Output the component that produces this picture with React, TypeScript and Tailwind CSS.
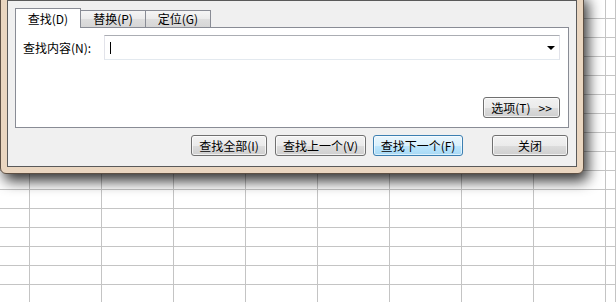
const font = "font-['Noto_Sans_CJK_SC','Liberation_Sans',sans-serif]";

const btn =
  'flex h-[21px] items-center justify-center rounded-[3px] border border-[#707070] bg-[linear-gradient(to_bottom,#f2f2f2_0%,#ebebeb_50%,#dddddd_51%,#cfcfcf_100%)] text-[12px] text-black shadow-[inset_0_0_0_1px_rgba(255,255,255,0.7)]';

const SheetGrid = () => {
  const rows = Array.from({ length: 16 });
  const cols = Array.from({ length: 10 });
  return (
    <div className="grid grid-cols-[30px_repeat(8,72px)_1fr] auto-rows-[19px]">
      {rows.map((_, r) =>
        cols.map((_, c) => (
          <div key={`${r}-${c}`} className="border-b border-r border-[#c4c4c4] bg-white" />
        )),
      )}
    </div>
  );
};

const Tab = ({ label, active }: { label: string; active?: boolean }) =>
  active ? (
    <div className="relative z-10 -mb-px flex h-[20px] w-[66px] items-center justify-center border border-b-0 border-[#898c95] bg-white text-[12px]">
      {label}
    </div>
  ) : (
    <div className="-ml-px flex h-[17px] w-[66px] items-center justify-center border border-b-0 border-[#898c95] bg-[linear-gradient(to_bottom,#f5f5f5_0%,#ebebeb_50%,#dedede_51%,#d6d6d6_100%)] text-[12px]">
      {label}
    </div>
  );

const FindDialog = () => (
  <div className="absolute left-0 top-[-7px] h-[181px] w-[584px] rounded-b-[6px] border border-[#5e5044] bg-[#ead6c0] p-[6px] shadow-[4px_7px_14px_rgba(0,0,0,0.8)]">
    <div className="flex h-full flex-col border border-[#5a5a5a] bg-[#f0f0f0] px-[7px] pt-[7px]">
      <div className="flex items-end">
        <Tab label="查找(D)" active />
        <Tab label="替换(P)" />
        <Tab label="定位(G)" />
      </div>

      <div className="flex h-[101px] flex-col border border-[#898c95] bg-white pl-[7px] pr-[8px] pt-[7px] pb-[9px]">
        <div className="flex items-center">
          <div className="w-[81px] text-[12px]">查找内容(N):</div>
          <div className="flex h-[25px] flex-1 items-center border border-[#abadb3] border-x-[#e2e3ea] border-b-[#e3e9ef] bg-white pl-[5px] pr-[4px]">
            <div className="h-[12px] w-px bg-black" />
            <div className="flex-1" />
            <div className="h-0 w-0 border-x-[4px] border-t-[4px] border-x-transparent border-t-black" />
          </div>
        </div>
        <div className="flex-1" />
        <div className="flex justify-end">
          <button className={`${btn} w-[77px] gap-2`}>
            <span>选项(T)</span>
            <span>&gt;&gt;</span>
          </button>
        </div>
      </div>

      <div className="mt-[7px] flex items-center justify-end pr-px">
        <button className={`${btn} w-[76px]`}>查找全部(I)</button>
        <button className={`${btn} ml-[8px] w-[91px]`}>查找上一个(V)</button>
        <button className="ml-[7px] flex h-[21px] w-[90px] items-center justify-center rounded-[3px] border border-[#3c7fb1] bg-[linear-gradient(to_bottom,#eaf6fd_0%,#d9f0fc_50%,#bee6fd_51%,#a7d9f5_100%)] text-[12px] shadow-[inset_0_0_0_1px_rgba(255,255,255,0.6)]">
          查找下一个(F)
        </button>
        <button className={`${btn} ml-[29px] w-[76px]`}>关闭</button>
      </div>
    </div>
  </div>
);

export default function App() {
  return (
    <div className={`relative h-[302px] w-[616px] overflow-hidden bg-white text-black ${font}`}>
      <SheetGrid />
      <FindDialog />
    </div>
  );
}
